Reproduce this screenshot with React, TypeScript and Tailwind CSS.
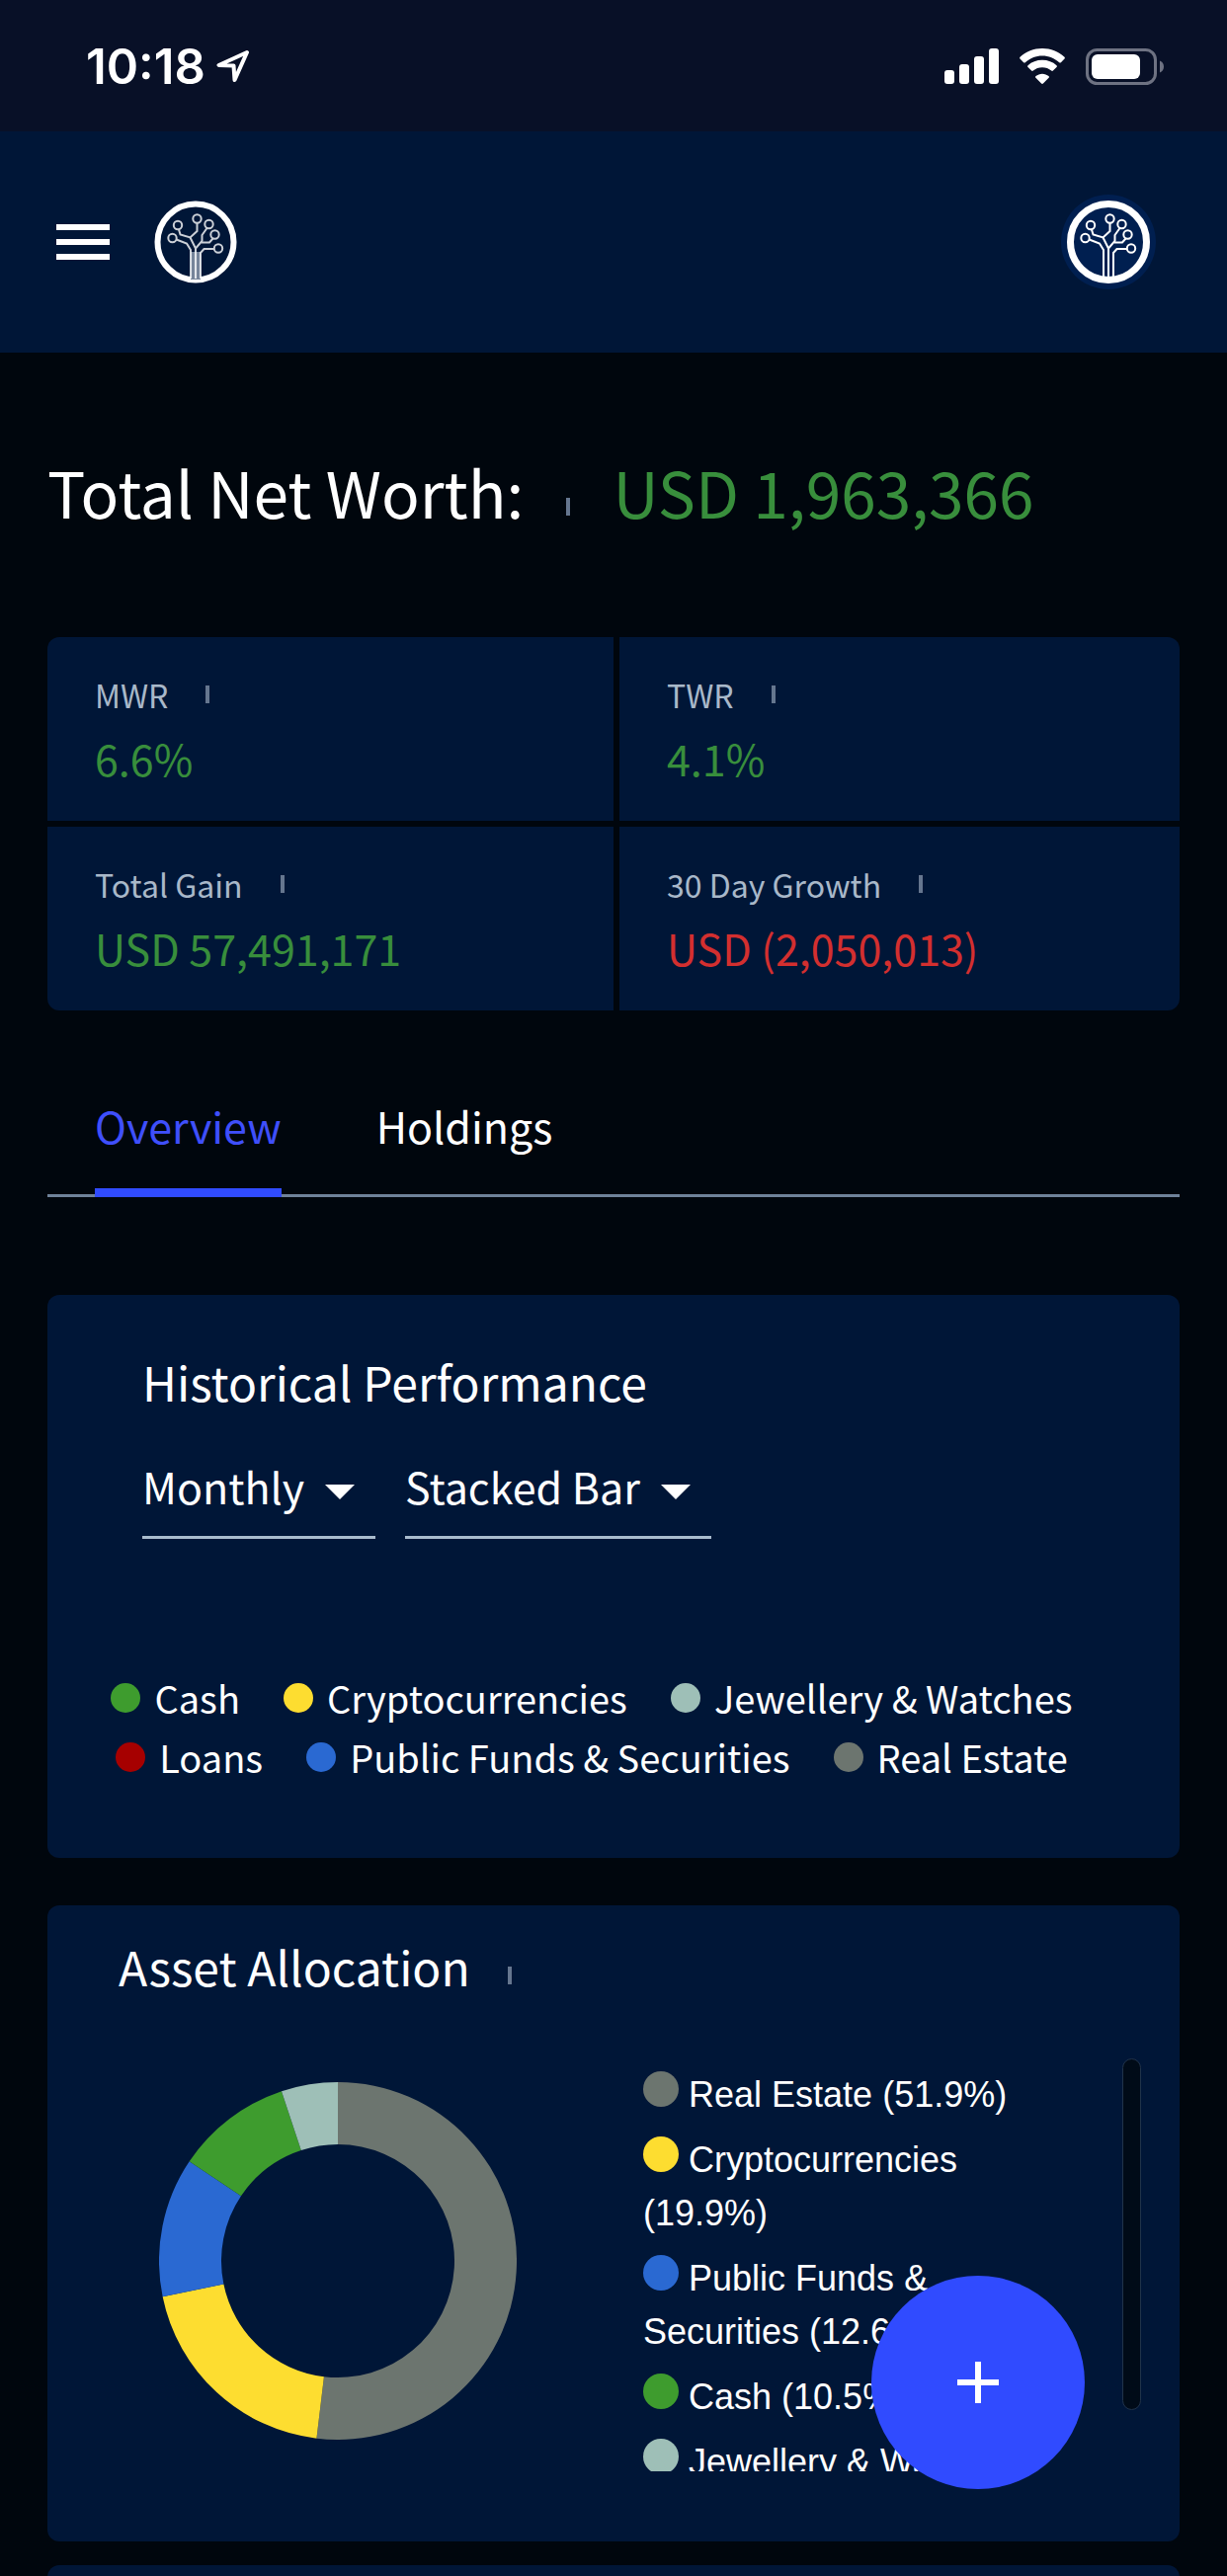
import { useState } from "react";

type StatData = {
  label: string;
  value: string;
  negative?: boolean;
};

const STATS: StatData[] = [
  { label: "MWR", value: "6.6%" },
  { label: "TWR", value: "4.1%" },
  { label: "Total Gain", value: "USD 57,491,171" },
  { label: "30 Day Growth", value: "USD (2,050,013)", negative: true },
];

const SERIES = [
  { name: "Cash", color: "bg-[#3e9c2e]" },
  { name: "Cryptocurrencies", color: "bg-[#fddd30]" },
  { name: "Jewellery & Watches", color: "bg-[#9ebfb7]" },
  { name: "Loans", color: "bg-[#a60000]" },
  { name: "Public Funds & Securities", color: "bg-[#2a69d2]" },
  { name: "Real Estate", color: "bg-[#6c756f]" },
];

const ALLOCATION = [
  { name: "Real Estate", share: 51.9, fill: "#6c756f", color: "bg-[#6c756f]" },
  { name: "Cryptocurrencies", share: 19.9, fill: "#fddd30", color: "bg-[#fddd30]" },
  { name: "Public Funds & Securities", share: 12.6, fill: "#2a69d2", color: "bg-[#2a69d2]" },
  { name: "Cash", share: 10.5, fill: "#3e9c2e", color: "bg-[#3e9c2e]" },
  { name: "Jewellery & Watches", share: 5.1, fill: "#9ebfb7", color: "bg-[#9ebfb7]" },
];

function StatusBar() {
  return (
    <div className="flex h-[133px] items-center justify-between bg-[#081027] pt-px pr-16 pl-[87px]">
      <div className="flex items-center gap-[11px]">
        <span className="font-['Inter',sans-serif] text-[49px] leading-none font-semibold">10:18</span>
        <svg viewBox="0 0 34 34" className="size-[34px]" fill="none" stroke="white" strokeWidth="4" strokeLinejoin="round">
          <path d="M31 3 2.500 16 17.500 16.500 18.500 31Z" />
        </svg>
      </div>
      <div className="flex items-center gap-5">
        <svg viewBox="0 0 55 36" className="h-9 w-[55px]" fill="white">
          <rect x="0" y="22" width="10" height="14" rx="3" />
          <rect x="15" y="16" width="10" height="20" rx="3" />
          <rect x="30" y="8" width="10" height="28" rx="3" />
          <rect x="45" y="0" width="10" height="36" rx="3" />
        </svg>
        <svg viewBox="0 0 48 36" className="h-9 w-12" fill="white">
          <path d="M24 7.500c6.500 0 12.500 2.500 17.200 6.700.5.500 1.200.5 1.700 0l3.600-3.600c.5-.5.5-1.300 0-1.800C40.400 3.200 32.500 0 24 0S7.600 3.200 1.500 8.800c-.5.500-.5 1.300 0 1.800l3.600 3.600c.5.500 1.200.5 1.700 0C11.500 10 17.500 7.500 24 7.500Z" />
          <path d="M24 19.300c3.500 0 6.700 1.200 9.200 3.300.5.500 1.300.5 1.700 0l3.600-3.600c.5-.5.5-1.300 0-1.800C34.700 13.800 29.600 11.800 24 11.800s-10.700 2-14.500 5.400c-.5.500-.5 1.300 0 1.800l3.600 3.600c.5.500 1.200.500 1.700 0 2.500-2.100 5.700-3.300 9.200-3.300Z" />
          <path d="M24.900 35.600 30.600 29.800c.5-.5.5-1.300-.1-1.700-1.800-1.500-4-2.400-6.500-2.400s-4.700.9-6.500 2.400c-.6.400-.6 1.200-.1 1.700l5.700 5.800c.5.500 1.300.5 1.800 0Z" />
        </svg>
        <svg viewBox="0 0 79 37" className="h-[37px] w-[79px]">
          <rect x="1.500" y="1.500" width="69" height="34" rx="10" fill="none" stroke="#6e7282" strokeWidth="3" />
          <rect x="6" y="6" width="49" height="25" rx="6" fill="white" />
          <path d="M75 12.500c2.500 1 4 3.200 4 6s-1.500 5-4 6Z" fill="#6e7282" />
        </svg>
      </div>
    </div>
  );
}

function TreeLogo({ className, soft }: { className: string; soft?: boolean }) {
  return (
    <svg viewBox="0 0 84 84" className={className} fill="none" stroke="white" strokeWidth="2">
      <circle cx="42" cy="42" r="38.500" strokeWidth={soft ? 6 : 7} />
      {soft && <path d="M37 52h10v28H37Z" fill="#77859b" stroke="none" />}
      <g opacity={soft ? 0.8 : 1}>
        <circle cx="24" cy="25" r="4.200" />
        <circle cx="18.500" cy="38" r="4.200" />
        <circle cx="43.500" cy="18.500" r="4.200" />
        <circle cx="55.500" cy="24" r="4.200" />
        <circle cx="61.500" cy="34.500" r="4.200" />
        <circle cx="65" cy="48.500" r="4.200" />
        <path d="M25 29.500 26.500 34.500 36.500 37.500 43.500 31V23" />
        <path d="M22.500 39.500 33 43.500 37 50V79" />
        <path d="M36.500 37.500 42 48.500V79" />
        <path d="M53.500 28 48.500 35V41L42 48.500" />
        <path d="M59.500 38.500 56 42.500H48" />
        <path d="M61 49H50.500L47 53V79" />
      </g>
    </svg>
  );
}

function Header() {
  return (
    <header className="flex h-56 items-center justify-between bg-[#001637] pr-[72px] pl-[57px]">
      <div className="flex items-center gap-[45px]">
        <button type="button" aria-label="Menu" className="flex w-[54px] flex-col gap-[9px]">
          <span className="h-[6px] w-full bg-white" />
          <span className="h-[6px] w-full bg-white" />
          <span className="h-[6px] w-full bg-white" />
        </button>
        <TreeLogo className="size-[84px]" soft />
      </div>
      <button type="button" aria-label="Account" className="rounded-full bg-[#001f50] p-[6px]">
        <TreeLogo className="size-[84px]" />
      </button>
    </header>
  );
}

// Info marker shown next to a label
function InfoMark() {
  return <span className="h-[18px] w-1 bg-[#65768f]" />;
}

function Stat({ stat, className }: { stat: StatData; className: string }) {
  return (
    <div className={`border-[#00060d] bg-[#001637] px-12 pt-[34px] pb-8 ${className}`}>
      <div className="flex items-center gap-[38px] text-[32px] leading-[48px] text-[#a9b8c9]">
        {stat.label}
        <InfoMark />
      </div>
      <p
        className={`mt-2 text-[43px] leading-[64px] ${
          stat.negative ? "text-[#d32f2f]" : "text-[#388e3c]"
        }`}
      >
        {stat.value}
      </p>
    </div>
  );
}

function Dropdown({ label, value, className }: { label: string; value: string; className: string }) {
  return (
    <div className={`relative ${className}`}>
      <select
        aria-label={label}
        className="h-[86px] w-full appearance-none border-b-[3px] border-[#a9bccd] bg-transparent pb-5 text-[43px] outline-none"
      >
        <option>{value}</option>
      </select>
      <svg
        viewBox="0 0 30 15"
        className="pointer-events-none absolute top-[31px] right-[21px] h-[15px] w-[30px]"
        fill="white"
      >
        <path d="M0 0h30L15 15Z" />
      </svg>
    </div>
  );
}

function HistoricalCard() {
  return (
    <section className="rounded-xl bg-[#001637] pb-[72px]">
      <div className="px-24 pt-[51px]">
        <h2 className="text-[48px] leading-[72px]">Historical Performance</h2>
        <div className="mt-[38px] flex gap-[30px]">
          <Dropdown label="Period" value="Monthly" className="w-[236px]" />
          <Dropdown label="Chart type" value="Stacked Bar" className="w-[310px]" />
        </div>
      </div>
      <ul className="mt-[131px] flex flex-wrap justify-center px-10">
        {SERIES.map((s) => (
          <li key={s.name} className="mr-11 flex items-center gap-[14px] text-[38px] leading-[60px]">
            <span className={`size-[30px] rounded-full ${s.color}`} />
            {s.name}
          </li>
        ))}
      </ul>
    </section>
  );
}

function Donut() {
  const outer = 181;
  const inner = 118;
  const point = (r: number, pct: number) => {
    const a = (pct / 100) * Math.PI * 2;
    return `${(outer + r * Math.sin(a)).toFixed(2)} ${(outer - r * Math.cos(a)).toFixed(2)}`;
  };

  let start = 0;
  return (
    <svg viewBox="0 0 362 362" className="size-[362px] shrink-0">
      {ALLOCATION.map((a) => {
        const from = start;
        const to = Math.min(from + a.share, 100);
        const large = a.share > 50 ? 1 : 0;
        start = to;
        return (
          <path
            key={a.name}
            fill={a.fill}
            d={`M${point(outer, from)}A${outer} ${outer} 0 ${large} 1 ${point(outer, to)}L${point(inner, to)}A${inner} ${inner} 0 ${large} 0 ${point(inner, from)}Z`}
          />
        );
      })}
    </svg>
  );
}

function AllocationCard() {
  return (
    <section className="mt-12 rounded-xl bg-[#001637] pb-[71px]">
      <div className="flex items-center gap-[38px] px-[72px] pt-[25px]">
        <h2 className="text-[48px] leading-[72px]">Asset Allocation</h2>
        <div className="flex pt-5">
          <InfoMark />
        </div>
      </div>
      <div className="mt-[58px] flex justify-between pr-[39px] pl-[113px]">
        <div className="pt-6">
          <Donut />
        </div>
        <div className="flex h-[418px] w-[504px] items-start justify-between overflow-hidden">
          <ul className="w-[420px] pt-[10px] font-['Liberation_Sans',sans-serif] text-[36px] leading-[54px]">
            {ALLOCATION.map((a) => (
              <li key={a.name} className="mb-3">
                <span className={`inline-block size-9 rounded-full align-baseline ${a.color}`} />{" "}
                {a.name} ({a.share}%)
              </li>
            ))}
          </ul>
          <div className="h-[356px] w-[19px] rounded-full border border-[#20334a] bg-[#000b18]" />
        </div>
      </div>
    </section>
  );
}

export default function App() {
  const [tab, setTab] = useState("Overview");

  return (
    <div className="relative h-screen overflow-hidden bg-[#00060d] font-['Noto_Sans_CJK_SC','Noto_Sans',sans-serif] text-white">
      <StatusBar />
      <Header />

      <main className="px-12">
        <div className="flex items-center gap-[43px] pt-[92px]">
          <h1 className="text-[64px] leading-[96px]">Total Net Worth:</h1>
          <div className="flex pt-8">
            <InfoMark />
          </div>
          <p className="text-[64px] leading-[96px] text-[#388e3c]">USD 1,963,366</p>
        </div>

        <div className="mt-[100px] grid grid-cols-2 overflow-hidden rounded-xl">
          <Stat stat={STATS[0]} className="" />
          <Stat stat={STATS[1]} className="border-l-[6px]" />
          <Stat stat={STATS[2]} className="border-t-[6px]" />
          <Stat stat={STATS[3]} className="border-t-[6px] border-l-[6px]" />
        </div>

        <nav role="tablist" className="mt-[72px] flex gap-24 border-b-[3px] border-[#6f8299] px-12">
          {["Overview", "Holdings"].map((t) => (
            <button
              key={t}
              type="button"
              role="tab"
              aria-selected={tab === t}
              onClick={() => setTab(t)}
              className={`-mb-[3px] h-[117px] border-b-[9px] pb-5 text-[43px] leading-[62px] ${
                tab === t ? "border-[#304bff] text-[#3f4ffb]" : "border-transparent"
              }`}
            >
              {t}
            </button>
          ))}
        </nav>

        <div className="pt-[99px]">
          <HistoricalCard />
          <AllocationCard />
          <section className="mt-6 h-96 rounded-xl bg-[#001637]" />
        </div>
      </main>

      <button
        type="button"
        aria-label="Add"
        className="absolute right-36 bottom-[88px] flex size-[216px] items-center justify-center rounded-full bg-[#304bff]"
      >
        <svg viewBox="0 0 42 42" className="size-[42px]" fill="white">
          <path d="M18 0h6v18h18v6H24v18h-6V24H0v-6h18Z" />
        </svg>
      </button>
    </div>
  );
}
